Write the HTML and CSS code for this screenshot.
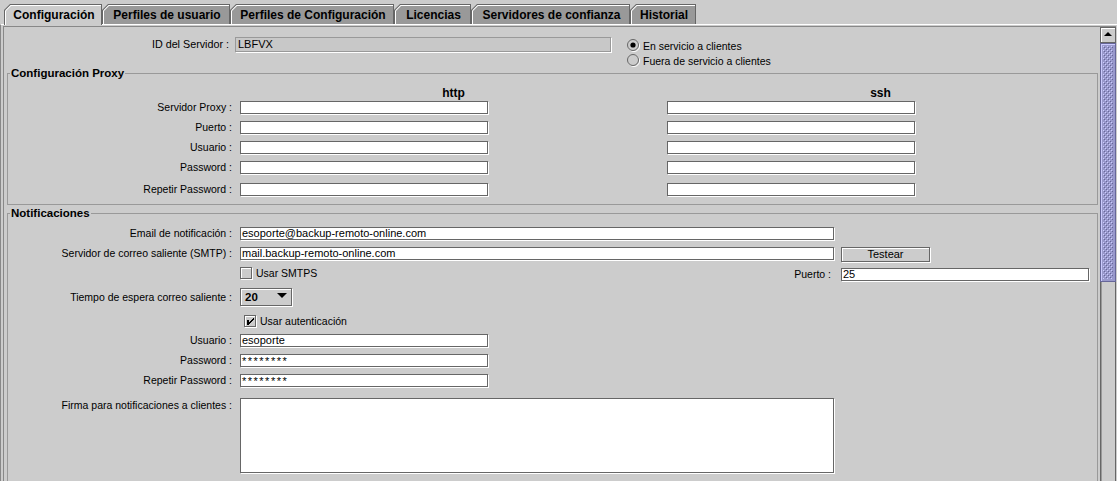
FILE: index.html
```html
<!DOCTYPE html>
<html lang="es">
<head>
<meta charset="utf-8">
<title>Configuración</title>
<link rel="stylesheet" href="styles.css">
</head>
<body>
<div class="tabs">
  <div class="tab sel t1"><div class="tab-hl"><div class="tab-face">Configuración</div></div></div>
  <div class="tab t2"><div class="tab-hl"><div class="tab-face">Perfiles de usuario</div></div></div>
  <div class="tab t3"><div class="tab-hl"><div class="tab-face">Perfiles de Configuración</div></div></div>
  <div class="tab t4"><div class="tab-hl"><div class="tab-face">Licencias</div></div></div>
  <div class="tab t5"><div class="tab-hl"><div class="tab-face">Servidores de confianza</div></div></div>
  <div class="tab t6"><div class="tab-hl"><div class="tab-face">Historial</div></div></div>
</div>
<div class="panel">
  <div class="scrollpane">
    <div class="viewport">
      <div class="top">
        <div class="idrow">
          <span class="lbl idlbl">ID del Servidor :</span>
          <div class="field dis idfield">LBFVX</div>
        </div>
        <div class="radios">
          <div class="radio">
            <svg class="rb" width="13" height="13" viewBox="0 0 13 13"><circle cx="7" cy="7" r="5.5" fill="none" stroke="#fff"/><circle cx="6" cy="6" r="5.5" fill="#ccc" stroke="#666"/><circle cx="6" cy="6" r="2.6" fill="#000"/></svg>
            <span>En servicio a clientes</span>
          </div>
          <div class="radio">
            <svg class="rb" width="13" height="13" viewBox="0 0 13 13"><circle cx="7" cy="7" r="5.5" fill="none" stroke="#fff"/><circle cx="6" cy="6" r="5.5" fill="#ccc" stroke="#666"/></svg>
            <span>Fuera de servicio a clientes</span>
          </div>
        </div>
      </div>

      <fieldset class="group proxy">
        <legend>Configuración Proxy</legend>
        <div class="hdr"><span class="hcell">http</span><span class="hcell">ssh</span></div>
        <div class="row r-first"><span class="lbl">Servidor Proxy :</span><div class="field fs"></div><div class="field fs ssh"></div></div>
        <div class="row"><span class="lbl">Puerto :</span><div class="field fs"></div><div class="field fs ssh"></div></div>
        <div class="row"><span class="lbl">Usuario :</span><div class="field fs"></div><div class="field fs ssh"></div></div>
        <div class="row"><span class="lbl">Password :</span><div class="field fs"></div><div class="field fs ssh"></div></div>
        <div class="row r-last"><span class="lbl">Repetir Password :</span><div class="field fs"></div><div class="field fs ssh"></div></div>
      </fieldset>

      <fieldset class="group notif">
        <legend>Notificaciones</legend>
        <div class="row n-email"><span class="lbl">Email de notificación :</span><div class="field fl">esoporte@backup-remoto-online.com</div></div>
        <div class="row n-smtp"><span class="lbl">Servidor de correo saliente (SMTP) :</span><div class="field fl">mail.backup-remoto-online.com</div><div class="btn">Testear</div></div>
        <div class="row n-smtps">
          <span class="lbl"></span>
          <svg class="cb cb-smtps" width="13" height="13" viewBox="0 0 13 13" shape-rendering="crispEdges"><rect x="0" y="0" width="13" height="13" fill="#ccc"/><rect x="1.5" y="1.5" width="11" height="11" fill="none" stroke="#fff"/><rect x="0.5" y="0.5" width="11" height="11" fill="none" stroke="#666"/></svg>
          <span class="cbtext">Usar SMTPS</span>
          <span class="plbl">Puerto :</span>
          <div class="field fs pfield">25</div>
        </div>
        <div class="row n-time">
          <span class="lbl tl">Tiempo de espera correo saliente :</span>
          <div class="combo"><span class="cval">20</span><svg class="carrow" width="10" height="5" viewBox="0 0 10 5"><polygon points="0,0 10,0 5,5" fill="#000"/></svg></div>
        </div>
        <div class="row n-auth">
          <span class="lbl"></span>
          <svg class="cb cb-auth" width="13" height="13" viewBox="0 0 13 13" shape-rendering="crispEdges"><rect x="0" y="0" width="13" height="13" fill="#ccc"/><rect x="1.5" y="1.5" width="11" height="11" fill="none" stroke="#fff"/><rect x="0.5" y="0.5" width="11" height="11" fill="none" stroke="#666"/><rect x="3" y="5" width="2" height="5" fill="#000"/><rect x="9" y="3" width="1" height="2" fill="#000"/><rect x="8" y="4" width="1" height="2" fill="#000"/><rect x="7" y="5" width="1" height="2" fill="#000"/><rect x="6" y="6" width="1" height="2" fill="#000"/><rect x="5" y="7" width="1" height="2" fill="#000"/></svg>
          <span class="cbtext">Usar autenticación</span>
        </div>
        <div class="row n-user"><span class="lbl">Usuario :</span><div class="field fs">esoporte</div></div>
        <div class="row n-pass"><span class="lbl">Password :</span><div class="field fs pw">********</div></div>
        <div class="row n-pass"><span class="lbl">Repetir Password :</span><div class="field fs pw">********</div></div>
        <div class="row n-firma"><span class="lbl fl-lbl">Firma para notificaciones a clientes :</span><div class="field fl area"></div></div>
      </fieldset>
    </div>
    <div class="vscroll">
      <div class="sb-up"><svg width="14" height="14" viewBox="0 0 14 14"><polygon points="3,8 11,8 7,4" fill="#000"/></svg></div>
      <div class="sb-thumb">
        <svg class="bumps" width="100%" height="100%"><defs><pattern id="bp" width="4" height="4" patternUnits="userSpaceOnUse"><rect x="0" y="0" width="1" height="1" fill="#ccccff"/><rect x="2" y="2" width="1" height="1" fill="#ccccff"/><rect x="1" y="1" width="1" height="1" fill="#666699"/><rect x="3" y="3" width="1" height="1" fill="#666699"/></pattern></defs><rect width="100%" height="100%" fill="url(#bp)"/></svg>
      </div>
      <div class="sb-track"></div>
    </div>
  </div>
</div>
</body>
</html>
```

FILE: styles.css
```css
* { box-sizing: border-box; }
html, body { margin: 0; padding: 0; }
body {
  width: 1117px;
  height: 481px;
  overflow: hidden;
  background: #cccccc;
  color: #000;
  font-family: "Liberation Sans", Arial, sans-serif;
}

/* ---------- tabs ---------- */
.tabs {
  height: 24px;
  padding-left: 4px;
  display: flex;
  align-items: flex-end;
}
.tab {
  flex: none;
  height: 20px;
  padding: 1px 1px 0 1px;
  background: #666666;
  clip-path: polygon(0 6px, 6px 0, 100% 0, 100% 100%, 0 100%);
}
.tab.sel {
  height: 21px;
  margin-bottom: -1px;
  position: relative;
  z-index: 1;
}
.tab-hl {
  height: 100%;
  padding: 1px 0 0 1px;
  background: #ffffff;
  clip-path: polygon(0 5.5px, 5.5px 0, 100% 0, 100% 100%, 0 100%);
}
.tab-face {
  height: 100%;
  background: #999999;
  clip-path: polygon(0 5px, 5px 0, 100% 0, 100% 100%, 0 100%);
  display: flex;
  align-items: center;
  justify-content: center;
  padding-left: 1px;
  font-weight: bold;
  font-size: 12px;
  white-space: nowrap;
}
.tab.sel .tab-face { background: #cccccc; padding-bottom: 1px; }
.t1 { width: 98px; }
.t2 { width: 128px; }
.t3 { width: 164px; }
.t4 { width: 77px; }
.t5 { width: 159px; }
.t6 { width: 66px; }

/* ---------- panel / scroll pane ---------- */
.panel {
  height: 457px;
  border-top: 1px solid #ffffff;
  border-left: 1px solid #888888;
  padding: 1px 1px 0 2px;
}
.scrollpane {
  height: 100%;
  display: flex;
  border-top: 1px solid #888888;
  border-left: 1px solid #888888;
}
.viewport {
  width: 1096px;
  flex: none;
  overflow: hidden;
}

/* ---------- top section ---------- */
.top {
  height: 40px;
  padding-top: 10px;
  display: flex;
  align-items: flex-start;
}
.idrow { display: flex; align-items: center; }
.lbl {
  flex: none;
  width: 224px;
  text-align: right;
  font-size: 10.5px;
  line-height: 13px;
  white-space: nowrap;
}
.idlbl { width: 225px; font-size: 10.75px; }
.field {
  flex: none;
  height: 13px;
  border: 1px solid #666666;
  background: #ffffff;
  box-shadow: 1px 1px 0 #ffffff;
  font-size: 11px;
  line-height: 11px;
  padding-left: 1px;
  white-space: nowrap;
  margin-left: 8px;
}
.field.dis {
  background: #c8c8c8;
  border-color: #999999;
}
.idfield {
  width: 376px;
  height: 15px;
  margin-left: 6px;
  line-height: 13px;
  padding-left: 2px;
}
.radios {
  margin-left: 16px;
  margin-top: 1px;
}
.radio {
  height: 15px;
  display: flex;
  align-items: center;
  font-size: 10.5px;
  white-space: nowrap;
}
.rb { flex: none; margin-right: 3px; }

/* ---------- titled groups ---------- */
fieldset.group {
  margin: 0 2px 0 3px;
  padding: 0;
  border: 1px solid #999999;
  min-width: 0;
}
fieldset.group legend {
  margin-left: 2px;
  padding: 0 1px;
  font-weight: bold;
  font-size: 11.5px;
  line-height: 13px;
  white-space: nowrap;
}
.proxy { padding-bottom: 8px !important; }
.notif { margin-top: 2px !important; padding-bottom: 40px !important; }

.hdr {
  margin-top: 6px;
  height: 14px;
  padding-left: 232px;
  display: flex;
}
.hcell {
  width: 427px;
  text-align: center;
  font-weight: bold;
  font-size: 12px;
  line-height: 14px;
}

.row {
  display: flex;
  align-items: flex-start;
  height: 13px;
  margin-top: 7px;
}
.row.r-first { margin-top: 1px; }
.row.r-last { margin-top: 9px; }
.fs { width: 248px; }
.fs.ssh { margin-left: 179px; }
.fl { width: 594px; }
.pw { letter-spacing: 1.5px; line-height: 13px; }

.btn {
  flex: none;
  width: 89px;
  height: 15px;
  margin-left: 7px;
  border: 1px solid #666666;
  background: #cccccc;
  box-shadow: 1px 1px 0 #ffffff, inset 1px 1px 0 #ffffff;
  font-size: 11px;
  line-height: 13px;
  text-align: center;
}

.n-smtps { height: 14px; padding-right: 8px; }
.cb { flex: none; }
.cb-smtps { margin-left: 8px; }
.cbtext {
  margin-left: 3px;
  font-size: 10.5px;
  line-height: 13px;
  white-space: nowrap;
}
.plbl {
  margin-left: auto;
  font-size: 10.5px;
  line-height: 15px;
  white-space: nowrap;
}
.pfield { margin-left: 10px; margin-top: 1px; }

.n-time { height: 18px; }
.tl { line-height: 18px; }
.combo {
  flex: none;
  width: 52px;
  height: 18px;
  margin-left: 8px;
  border: 1px solid #666666;
  background: #cccccc;
  box-shadow: 1px 1px 0 #ffffff, inset 1px 1px 0 #ffffff;
  display: flex;
  align-items: center;
  padding-left: 4px;
}
.cval { font-weight: bold; font-size: 11.5px; line-height: 16px; }
.carrow { margin-left: auto; margin-right: 4px; margin-bottom: 3px; }

.n-auth { margin-top: 9px; }
.cb-auth { margin-left: 12px; }
.n-user { margin-top: 6px; }
.n-firma { margin-top: 11px; height: 75px; }
.fl-lbl { margin-top: 1px; }
.area { height: 75px; }

/* ---------- scrollbar ---------- */
.vscroll {
  width: 16px;
  flex: none;
  display: flex;
  flex-direction: column;
}
.sb-up {
  height: 16px;
  flex: none;
  border: 1px solid #666666;
  background: #cccccc;
  box-shadow: inset 1px 1px 0 #ffffff;
}
.sb-up svg { display: block; }
.sb-thumb {
  height: 239px;
  flex: none;
  border: 1px solid #666699;
  background: #9999cc;
  box-shadow: inset 1px 1px 0 #ccccff;
  padding: 2px;
}
.bumps { display: block; }
.sb-track {
  flex: 1;
  border-left: 1px solid #666666;
  border-right: 1px solid #666666;
  background: #cccccc;
  box-shadow: inset 1px 0 0 #999999;
}
```
